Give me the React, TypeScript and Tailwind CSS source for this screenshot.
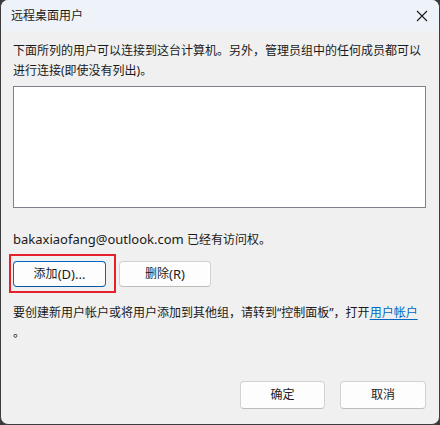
const font = {
  fontFamily: '"Noto Sans", "Noto Sans CJK SC", sans-serif',
};

const Button = ({
  label,
  className,
}: {
  label: React.ReactNode;
  className: string;
}) => (
  <button
    type="button"
    className={`h-[26px] rounded-[4px] bg-[#fdfdfd] text-[12px] text-[#1b1b1b] flex items-center justify-center ${className}`}
  >
    {label}
  </button>
);

export default function App() {
  return (
    <div className="w-[440px] h-[425px] bg-[#3a3a3a]" style={font}>
      <div className="relative w-full h-full flex flex-col bg-[#f0f0f0] border-x border-b border-[#3c3c3c] rounded-[8px] overflow-hidden">
        {/* Title bar */}
        <div className="h-[31px] shrink-0 flex items-center justify-between pl-[10px] pr-[8px] bg-[#eef2f9]">
          <span className="text-[12px] text-[#1a1a1a] leading-none">远程桌面用户</span>
          <svg width="12" height="12" viewBox="0 0 12 12" className="mr-[3px]">
            <path d="M1 1 L11 11 M11 1 L1 11" stroke="#1a1a1a" strokeWidth="1.1" />
          </svg>
        </div>

        {/* Body */}
        <div className="flex-1 flex flex-col pl-[12px] pr-[13px] pt-[10px] text-[12px] leading-[20px] text-[#1a1a1a]">
          <p>
            下面所列的用户可以连接到这台计算机。另外，管理员组中的任何成员都可以
            <br />
            进行连接(即使没有列出)。
          </p>

          <div className="mt-[5px] h-[122px] bg-white border border-[#7c818a]" />

          <p className="mt-[21px]">
            <span className="text-[13px]">bakaxiaofang@outlook.com</span> 已经有访问权。
          </p>

          <div className="relative mt-[11px] flex gap-[13px]">
            <Button
              label={<>添加<span className="text-[13px]">(D)...</span></>}
              className="w-[93px] border border-[#0067c0] border-b-[#00569f]"
            />
            <Button
              label={<>删除<span className="text-[13px]">(R)</span></>}
              className="w-[92px] border border-[#d2d2d2] border-b-[#bdbdbd]"
            />
            <div className="absolute left-[-4px] top-[-7px] w-[107px] h-[39px] border-2 border-[#e6202b] pointer-events-none" />
          </div>

          <p className="mt-[16px]">
            要创建新用户帐户或将用户添加到其他组，请转到“控制面板”，打开
            <span className="text-[#0067c0] underline underline-offset-2">用户帐户</span>
            <br />。
          </p>

          <div className="mt-auto mb-[15px] flex justify-end gap-[15px]">
            <Button label="确定" className="w-[85px] h-[28px] border border-[#d2d2d2] border-b-[#bdbdbd]" />
            <Button label="取消" className="w-[86px] h-[28px] border border-[#d2d2d2] border-b-[#bdbdbd]" />
          </div>
        </div>
      </div>
    </div>
  );
}
